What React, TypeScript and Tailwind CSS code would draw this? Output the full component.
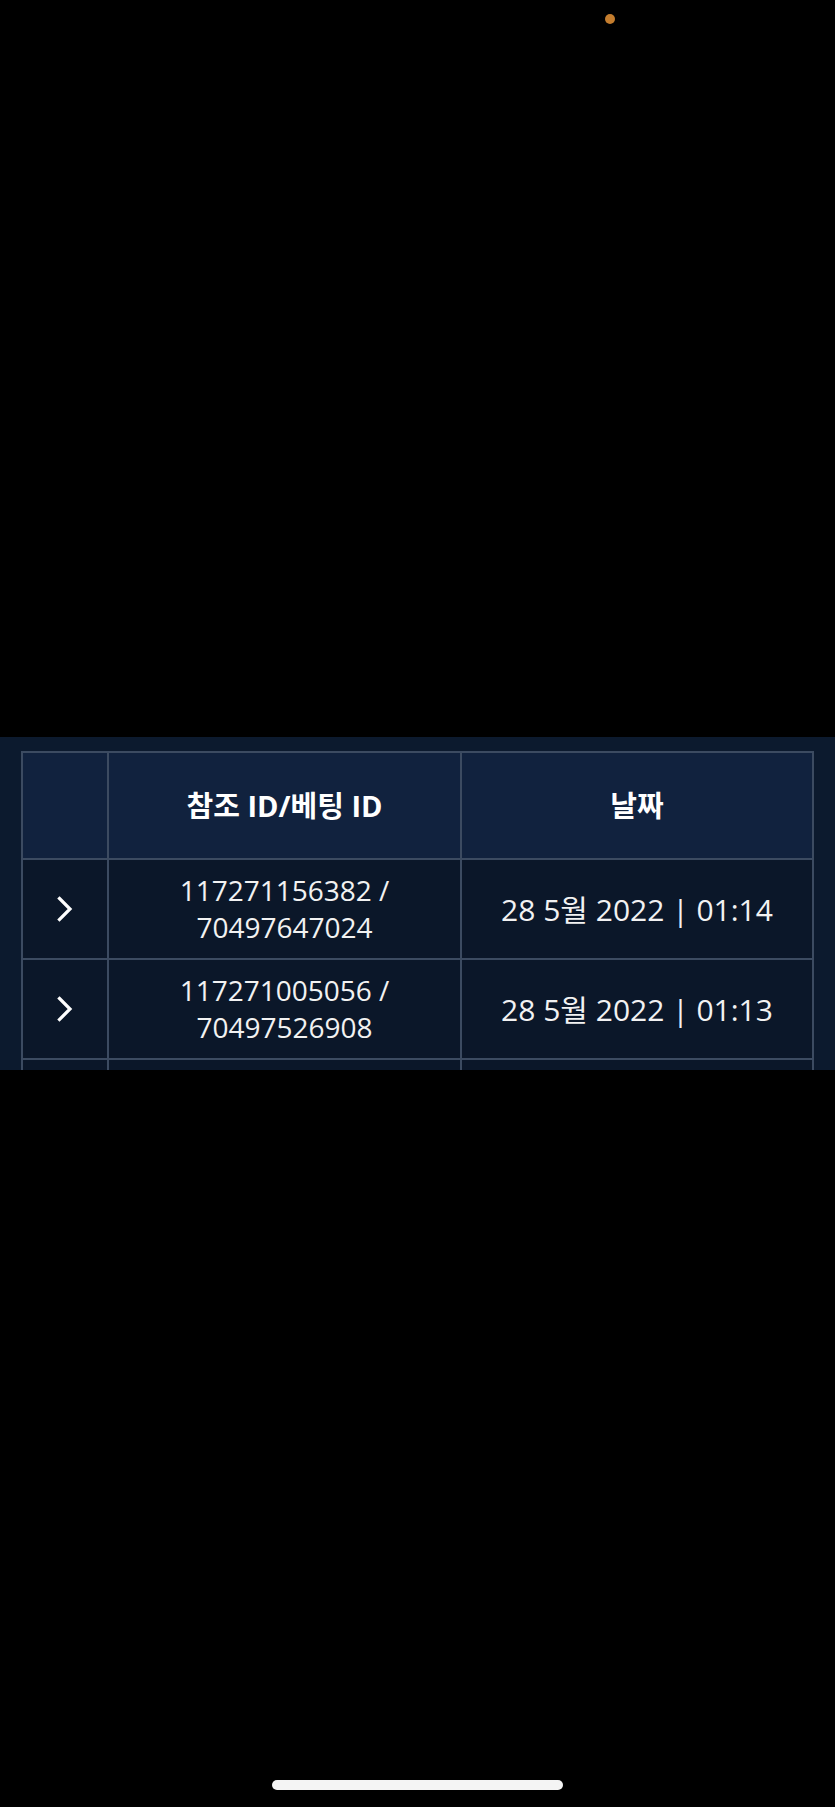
const rows = [
  { ids: ['117271156382 /', '70497647024'], date: '28 5월 2022 | 01:14' },
  { ids: ['117271005056 /', '70497526908'], date: '28 5월 2022 | 01:13' },
  { ids: ['', ''], date: '' },
];

const font = { fontFamily: '"Open Sans", "Noto Sans CJK KR", sans-serif' };

function Chevron() {
  return (
    <svg width="16" height="26" viewBox="0 0 16 26" fill="none" stroke="#ffffff" strokeWidth={3.2} strokeLinecap="square">
      <polyline points="2.5,2.5 13,13 2.5,23.5" />
    </svg>
  );
}

export default function App() {
  return (
    <div className="relative w-[835px] h-[1807px] bg-black flex flex-col" style={font}>
      {/* status dot */}
      <div className="absolute left-[605px] top-[14px] w-[10px] h-[10px] rounded-full bg-[#c47d2e]" />

      <div className="h-[737px] shrink-0" />

      {/* table panel */}
      <div className="h-[333px] shrink-0 overflow-hidden bg-[#0c1a2e] px-[21px] pt-[14px]">
        <div className="grid grid-cols-[84px_351px_350px] gap-[2px] p-[2px] bg-[#3c4b61]">
          <div className="h-[105px] bg-[#11223e]" />
          <div className="h-[105px] bg-[#11223e] flex items-center justify-center text-[29px] font-bold text-white">
            참조 ID/베팅 ID
          </div>
          <div className="h-[105px] bg-[#11223e] flex items-center justify-center text-[29px] font-bold text-white">
            날짜
          </div>

          {rows.map((r, i) => (
            <div key={i} className="contents">
              <div className="h-[98px] bg-[#0b1729] flex items-center justify-center">
                {r.date && <Chevron />}
              </div>
              <div className="h-[98px] bg-[#0b1729] flex flex-col items-center justify-center text-[28px] leading-[37px] text-[#f2f2f2]">
                <span>{r.ids[0]}</span>
                <span>{r.ids[1]}</span>
              </div>
              <div className="h-[98px] bg-[#0b1729] flex items-center justify-center text-[30px] text-[#f2f2f2]">
                {r.date}
              </div>
            </div>
          ))}
        </div>
      </div>

      <div className="flex-1 flex flex-col justify-end items-center pb-[17px]">
        <div className="w-[291px] h-[10px] rounded-full bg-[#f4f4f4]" />
      </div>
    </div>
  );
}
